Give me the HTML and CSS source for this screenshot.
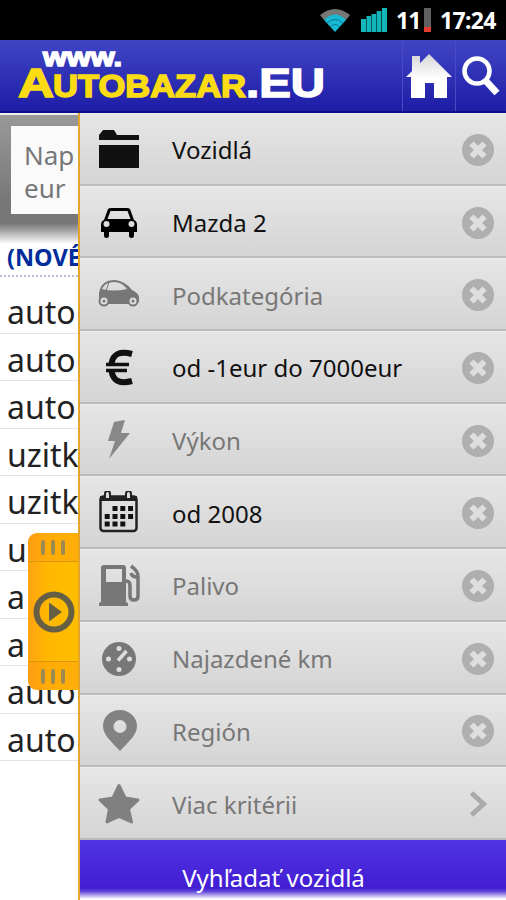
FILE: index.html
```html
<!DOCTYPE html>
<html lang="sk">
<head>
  <meta charset="UTF-8" />
  <meta name="viewport" content="width=device-width, initial-scale=1.0"/>
  <title>Autobazar.EU</title>
  <link rel="stylesheet" href="styles.css">
</head>
<body>
  <!-- Status bar -->
  <div class="status">
    <svg class="wifi" width="32" height="25" viewBox="0 0 32 25">
      <path d="M1 7Q16-5 31 7L27 12Q16 4 5 12Z" fill="#777"/>
      <path d="M5 12Q16 1 27 12L16 24Z" fill="#18b9d4"/>
      <path d="M8 15Q16 8 24 15M11 19Q16 14 21 19" fill="none" stroke="#087d96" stroke-width="1"/>
    </svg>
    <svg class="signal" width="27" height="24" viewBox="0 0 27 24" fill="#12b5b8">
      <path d="M0 11h5v13H0zM5.500 8h4.500v16H5.500zM10.500 6h4.700v18h-4.700zM15.700 3h4.700v21h-4.700zM21 0h5v24h-5z"/>
    </svg>
    <span class="percent">11</span>
    <span class="battery"></span>
    <span class="time">17:24</span>
  </div>

  <!-- Header -->
  <div class="header">
    <svg class="logo" width="330" height="72" viewBox="0 0 330 72">
      <text class="www" x="43" y="26" textLength="79" lengthAdjust="spacingAndGlyphs">www.</text>
      <text class="name" x="18" y="57" textLength="36" lengthAdjust="spacingAndGlyphs" font-size="41">A</text>
      <text class="name" x="53" y="57" textLength="193" lengthAdjust="spacingAndGlyphs" font-size="31">UTOBAZAR</text>
      <text class="eu" x="246" y="57" textLength="79" lengthAdjust="spacingAndGlyphs">.EU</text>
    </svg>
    <div class="home">
      <svg width="48" height="46" viewBox="0 0 48 46">
        <defs>
          <linearGradient id="roof" x1="0" y1="0" x2="0" y2="1">
            <stop offset="0" stop-color="#d4d4d8"/>
            <stop offset=".55" stop-color="#fff"/>
          </linearGradient>
        </defs>
        <path d="M1 24L7 18V3h8v7l9-9 23 23h-5v21H29V30h-9v15H6V24z" fill="url(#roof)"/>
      </svg>
    </div>
    <div class="search">
      <svg width="40" height="44" viewBox="0 0 40 44" fill="none" stroke="#fff">
        <circle cx="16" cy="16" r="12.5" stroke-width="4.5"/>
        <path d="M24 25L36 38" stroke-width="7"/>
      </svg>
    </div>
  </div>

  <div class="content">
    <!-- Page below the panel -->
    <div class="page">
      <div class="search-box">
        <div class="search-input">Nap<br>eur</div>
      </div>
      <div class="news">(NOVÉ</div>
      <ul class="links">
        <li>auto</li>
        <li>auto</li>
        <li>auto</li>
        <li>uzitk</li>
        <li>uzitk</li>
        <li>u</li>
        <li>a</li>
        <li>a</li>
        <li>auto</li>
        <li>auto</li>
      </ul>
      <div class="handle">
        <div class="grip"><i></i><i></i><i></i></div>
        <div class="play">
          <svg width="42" height="42" viewBox="0 0 42 42">
            <circle cx="21" cy="21" r="17.5" fill="none" stroke="#665f43" stroke-width="6"/>
            <path d="M16 11.500L29 21 16 30.500z" fill="#665f43"/>
          </svg>
        </div>
        <div class="grip"><i></i><i></i><i></i></div>
      </div>
    </div>

    <!-- Filter panel -->
    <div class="panel">
      <div class="row on">
        <svg class="icon" viewBox="0 0 44 44" fill="#111">
          <path d="M2 12V7l4-5h11l3 5h22v5zM2 17h40v23H2z"/>
        </svg>
        <span>Vozidlá</span>
        <svg class="clear" viewBox="0 0 32 32"><use href="#x"/></svg>
      </div>
      <div class="row on">
        <svg class="icon" viewBox="0 0 44 44">
          <path fill="#000" fill-rule="evenodd" d="M11 8Q12 7 14 7H30Q32 7 33 8L37 19Q40 20 40 24V31H37V35Q37 37 34.500 37T32 35V31H12V35Q12 37 9.500 37T7 35V31H4V24Q4 20 7 19zM13.500 10L10.500 18H33.500L30.500 10z"/>
          <circle cx="9.500" cy="23" r="3" fill="#ddd"/><circle cx="34.500" cy="23" r="3" fill="#ddd"/>
        </svg>
        <span>Mazda 2</span>
        <svg class="clear" viewBox="0 0 32 32"><use href="#x"/></svg>
      </div>
      <div class="row">
        <svg class="icon" viewBox="0 0 44 44">
          <path fill="#777" d="M2 29V20Q4 7 18 7Q28 8 35 17Q42 20 42 25V29L38 31H6z"/>
          <path fill="#ddd" d="M5 16Q8 9 17 9Q25 9 30 16Q17 19 5 16z"/>
          <path stroke="#777" d="M12 9L9 18"/>
          <g fill="#ddd" stroke="#777" stroke-width="2"><circle cx="7" cy="28" r="4.500"/><circle cx="36" cy="28" r="4.500"/></g>
          <circle cx="7" cy="28" r="1.500" fill="#777"/><circle cx="36" cy="28" r="1.500" fill="#777"/>
        </svg>
        <span>Podkategória</span>
        <svg class="clear" viewBox="0 0 32 32"><use href="#x"/></svg>
      </div>
      <div class="row on">
        <svg class="icon" viewBox="0 0 44 44" fill="none" stroke="#111">
          <path d="M35 8Q17 3 14.500 17.500M14.500 25Q17 40 35 35" stroke-width="6"/>
          <path d="M9 18.500h23M9 24.500h21" stroke-width="3.500"/>
        </svg>
        <span>od -1eur do 7000eur</span>
        <svg class="clear" viewBox="0 0 32 32"><use href="#x"/></svg>
      </div>
      <div class="row">
        <svg class="icon" viewBox="0 0 44 44" fill="#888">
          <path d="M17 3L28 1 24 14H33L12 40 18 22H11z"/>
        </svg>
        <span>Výkon</span>
        <svg class="clear" viewBox="0 0 32 32"><use href="#x"/></svg>
      </div>
      <div class="row on">
        <svg class="icon" viewBox="0 0 44 44">
          <rect x="3.500" y="5.500" width="36" height="34.500" rx="3" fill="none" stroke="#222" stroke-width="2.500"/>
          <path fill="#222" d="M3 5h37v5H3z"/>
          <path fill="#ddd" stroke="#222" stroke-width="2" d="M8 8V3q0-3 2.500-3T13 3v5zM29 8V3q0-3 2.500-3T34 3v5z"/>
          <path stroke="#111" stroke-width="5" stroke-dasharray="5 2.800" d="M15.500 17.500h20.500M7.700 25.500h28.400M7.700 33h20.600"/>
        </svg>
        <span>od 2008</span>
        <svg class="clear" viewBox="0 0 32 32"><use href="#x"/></svg>
      </div>
      <div class="row">
        <svg class="icon" viewBox="0 0 44 44">
          <path fill="#777" fill-rule="evenodd" d="M4 4Q4 1 7 1H26Q29 1 29 4V38L31 39V42H2V39L4 38zM9 5V18H25V5z"/>
          <path fill="none" stroke="#777" stroke-width="3.500" d="M29 17q4 0 4 5v10q0 4 4 4t4-4V12q0-5-7-10M34 9q1 4 6 4"/>
        </svg>
        <span>Palivo</span>
        <svg class="clear" viewBox="0 0 32 32"><use href="#x"/></svg>
      </div>
      <div class="row">
        <svg class="icon" viewBox="0 0 44 44">
          <circle cx="22" cy="22" r="17" fill="#777"/>
          <g fill="#ddd"><circle cx="22" cy="11.500" r="2.500"/><circle cx="11.500" cy="22" r="2.500"/><circle cx="32.500" cy="22" r="2.500"/><circle cx="22" cy="32.500" r="2.500"/></g>
          <path stroke="#ddd" stroke-width="3.500" d="M21 23.500L29.500 14"/>
        </svg>
        <span>Najazdené km</span>
        <svg class="clear" viewBox="0 0 32 32"><use href="#x"/></svg>
      </div>
      <div class="row">
        <svg class="icon" viewBox="0 0 44 44" fill="#828282">
          <path fill-rule="evenodd" d="M23 1C13 1 6 8 6 17C6 26 14 32 23 42C32 32 40 26 40 17C40 8 32 1 23 1zM23 11a6.500 6.500 0 1 1 0 13a6.500 6.500 0 1 1 0-13z"/>
        </svg>
        <span>Región</span>
        <svg class="clear" viewBox="0 0 32 32"><use href="#x"/></svg>
      </div>
      <div class="row">
        <svg class="icon" viewBox="0 0 44 44" fill="#808080" stroke="#808080" stroke-width="3" stroke-linejoin="round">
          <path d="M22 3.500L28 16 41 18 31.500 27 34.500 40 22 34.500 10 40 12.500 27 3 18 16 16z"/>
        </svg>
        <span>Viac kritérii</span>
        <svg class="clear" viewBox="0 0 32 32" fill="none" stroke="#aaa" stroke-width="5"><path d="M9.500 5L21.500 16 9.500 27"/></svg>
      </div>
      <div class="submit">Vyhľadať vozidlá</div>
    </div>
  </div>

  <svg class="symbols" width="0" height="0">
    <symbol id="x" viewBox="0 0 32 32">
      <circle cx="16" cy="16" r="16" fill="#afafaf"/>
      <path d="M9.500 9.500l13 13M22.500 9.500l-13 13" stroke="#dedede" stroke-width="6"/>
    </symbol>
  </svg>
</body>
</html>
```
FILE: styles.css
```css
body {
  margin: 0;
  height: 900px;
  overflow: hidden;
  background: #fff;
  font-family: 'Noto Sans', 'Open Sans', sans-serif;
}

.status {
  box-sizing: border-box;
  height: 40px;
  padding-right: 10px;
  background: #000;
  color: #fff;
  display: flex;
  align-items: center;
  justify-content: flex-end;
  font-size: 23px;
  font-weight: bold;
}

.wifi {
  margin-right: 10px;
}

.signal {
  margin-right: 8px;
}

.percent {
  width: 26px;
  letter-spacing: -1px;
}

.battery {
  width: 7px;
  height: 24px;
  margin: 0 9px 0 2px;
  background: linear-gradient(#606060 78%, #e53a2e 78%);
}

.time {
  width: 56px;
  letter-spacing: -0.7px;
}

.header {
  box-sizing: border-box;
  height: 73px;
  display: flex;
  background: linear-gradient(#4045c4, #1d1da6);
  border-bottom: 2px solid #10108c;
}

.logo {
  margin-right: 72px;
}

.logo text {
  font-family: 'Liberation Sans', Arial, sans-serif;
  font-weight: bold;
  stroke-width: 1.5px;
}

.logo .www {
  font-size: 26px;
  fill: #fff;
  stroke: #fff;
}

.logo .name {
  fill: #fbdc14;
  stroke: #fbdc14;
}

.logo .eu {
  font-size: 41px;
  fill: #fff;
  stroke: #fff;
}

.home,
.search {
  box-sizing: border-box;
  border-left: 1px solid #4a4ac4;
}

.home {
  width: 53px;
  padding: 13px 0 0 2px;
}

.search {
  width: 51px;
  padding: 15px 0 0 5px;
}

.content {
  height: 787px;
  display: flex;
}

.page {
  position: relative;
  box-sizing: border-box;
  width: 80px;
  border-right: 2px solid #e5a52c;
  overflow: hidden;
}

.search-box {
  box-sizing: border-box;
  height: 131px;
  padding: 11px 0 0 11px;
  border-top: 2px solid #eee;
  background: linear-gradient(#999, #777 88px, #777 108px, #999 114px, #fff);
}

.search-input {
  box-sizing: border-box;
  width: 100px;
  height: 88px;
  padding: 13px 0 0 13px;
  background: #fafafa;
  color: #777;
  font-size: 26px;
  line-height: 33px;
}

.news {
  box-sizing: border-box;
  height: 33px;
  padding-left: 7px;
  border-bottom: 2px dotted #b5bfd0;
  color: #002c9c;
  font-size: 23.5px;
  font-weight: bold;
  line-height: 26px;
}

.links {
  list-style: none;
  margin: 0;
  padding: 9px 0 0 0;
  width: 200px;
}

.links li {
  box-sizing: border-box;
  height: 47.5px;
  padding-left: 7px;
  border-bottom: 1px solid #e2e2e2;
  color: #222;
  font-size: 32px;
  line-height: 51px;
}

.handle {
  position: absolute;
  left: 28px;
  top: 420px;
  width: 50px;
  height: 157px;
  display: flex;
  flex-direction: column;
  border-radius: 9px 0 0 9px;
  background: linear-gradient(90deg, #ffa312, #ffb800 40%, #ffbd00);
}

.grip {
  height: 28px;
  display: flex;
  align-items: center;
  justify-content: center;
  gap: 6px;
  background: rgba(255, 150, 20, .35);
  border-radius: 9px 0 0 9px;
}

.grip i {
  width: 4px;
  height: 15px;
  border-radius: 2px;
  background: #9c8a4e;
}

.play {
  flex: 1;
  display: flex;
  align-items: center;
  justify-content: center;
  padding-left: 2px;
  border-top: 1px solid #d9960c;
  border-bottom: 1px solid #d9960c;
}

.panel {
  flex: 1;
  display: flex;
  flex-direction: column;
}

.row {
  box-sizing: border-box;
  flex-shrink: 0;
  height: 72.7px;
  padding: 2px 12px 0 17px;
  display: flex;
  align-items: center;
  border-top: 1px solid #ededed;
  border-bottom: 2px solid #bcbcbc;
  background: linear-gradient(#e6e6e6, #d4d4d4);
  color: #777;
  font-size: 24px;
}

.row span {
  flex: 1;
  padding-left: 31px;
}

.row.on {
  color: #111;
}

.icon {
  width: 44px;
  height: 44px;
}

.clear {
  width: 32px;
  height: 32px;
}

.submit {
  flex: 1;
  padding-right: 39px;
  background: linear-gradient(#5034e2, #421dd4 48px, #5b3dd8 51px, #fff 59px);
  color: #fff;
  font-size: 24px;
  line-height: 75px;
  text-align: center;
}

.symbols {
  position: absolute;
}
```
